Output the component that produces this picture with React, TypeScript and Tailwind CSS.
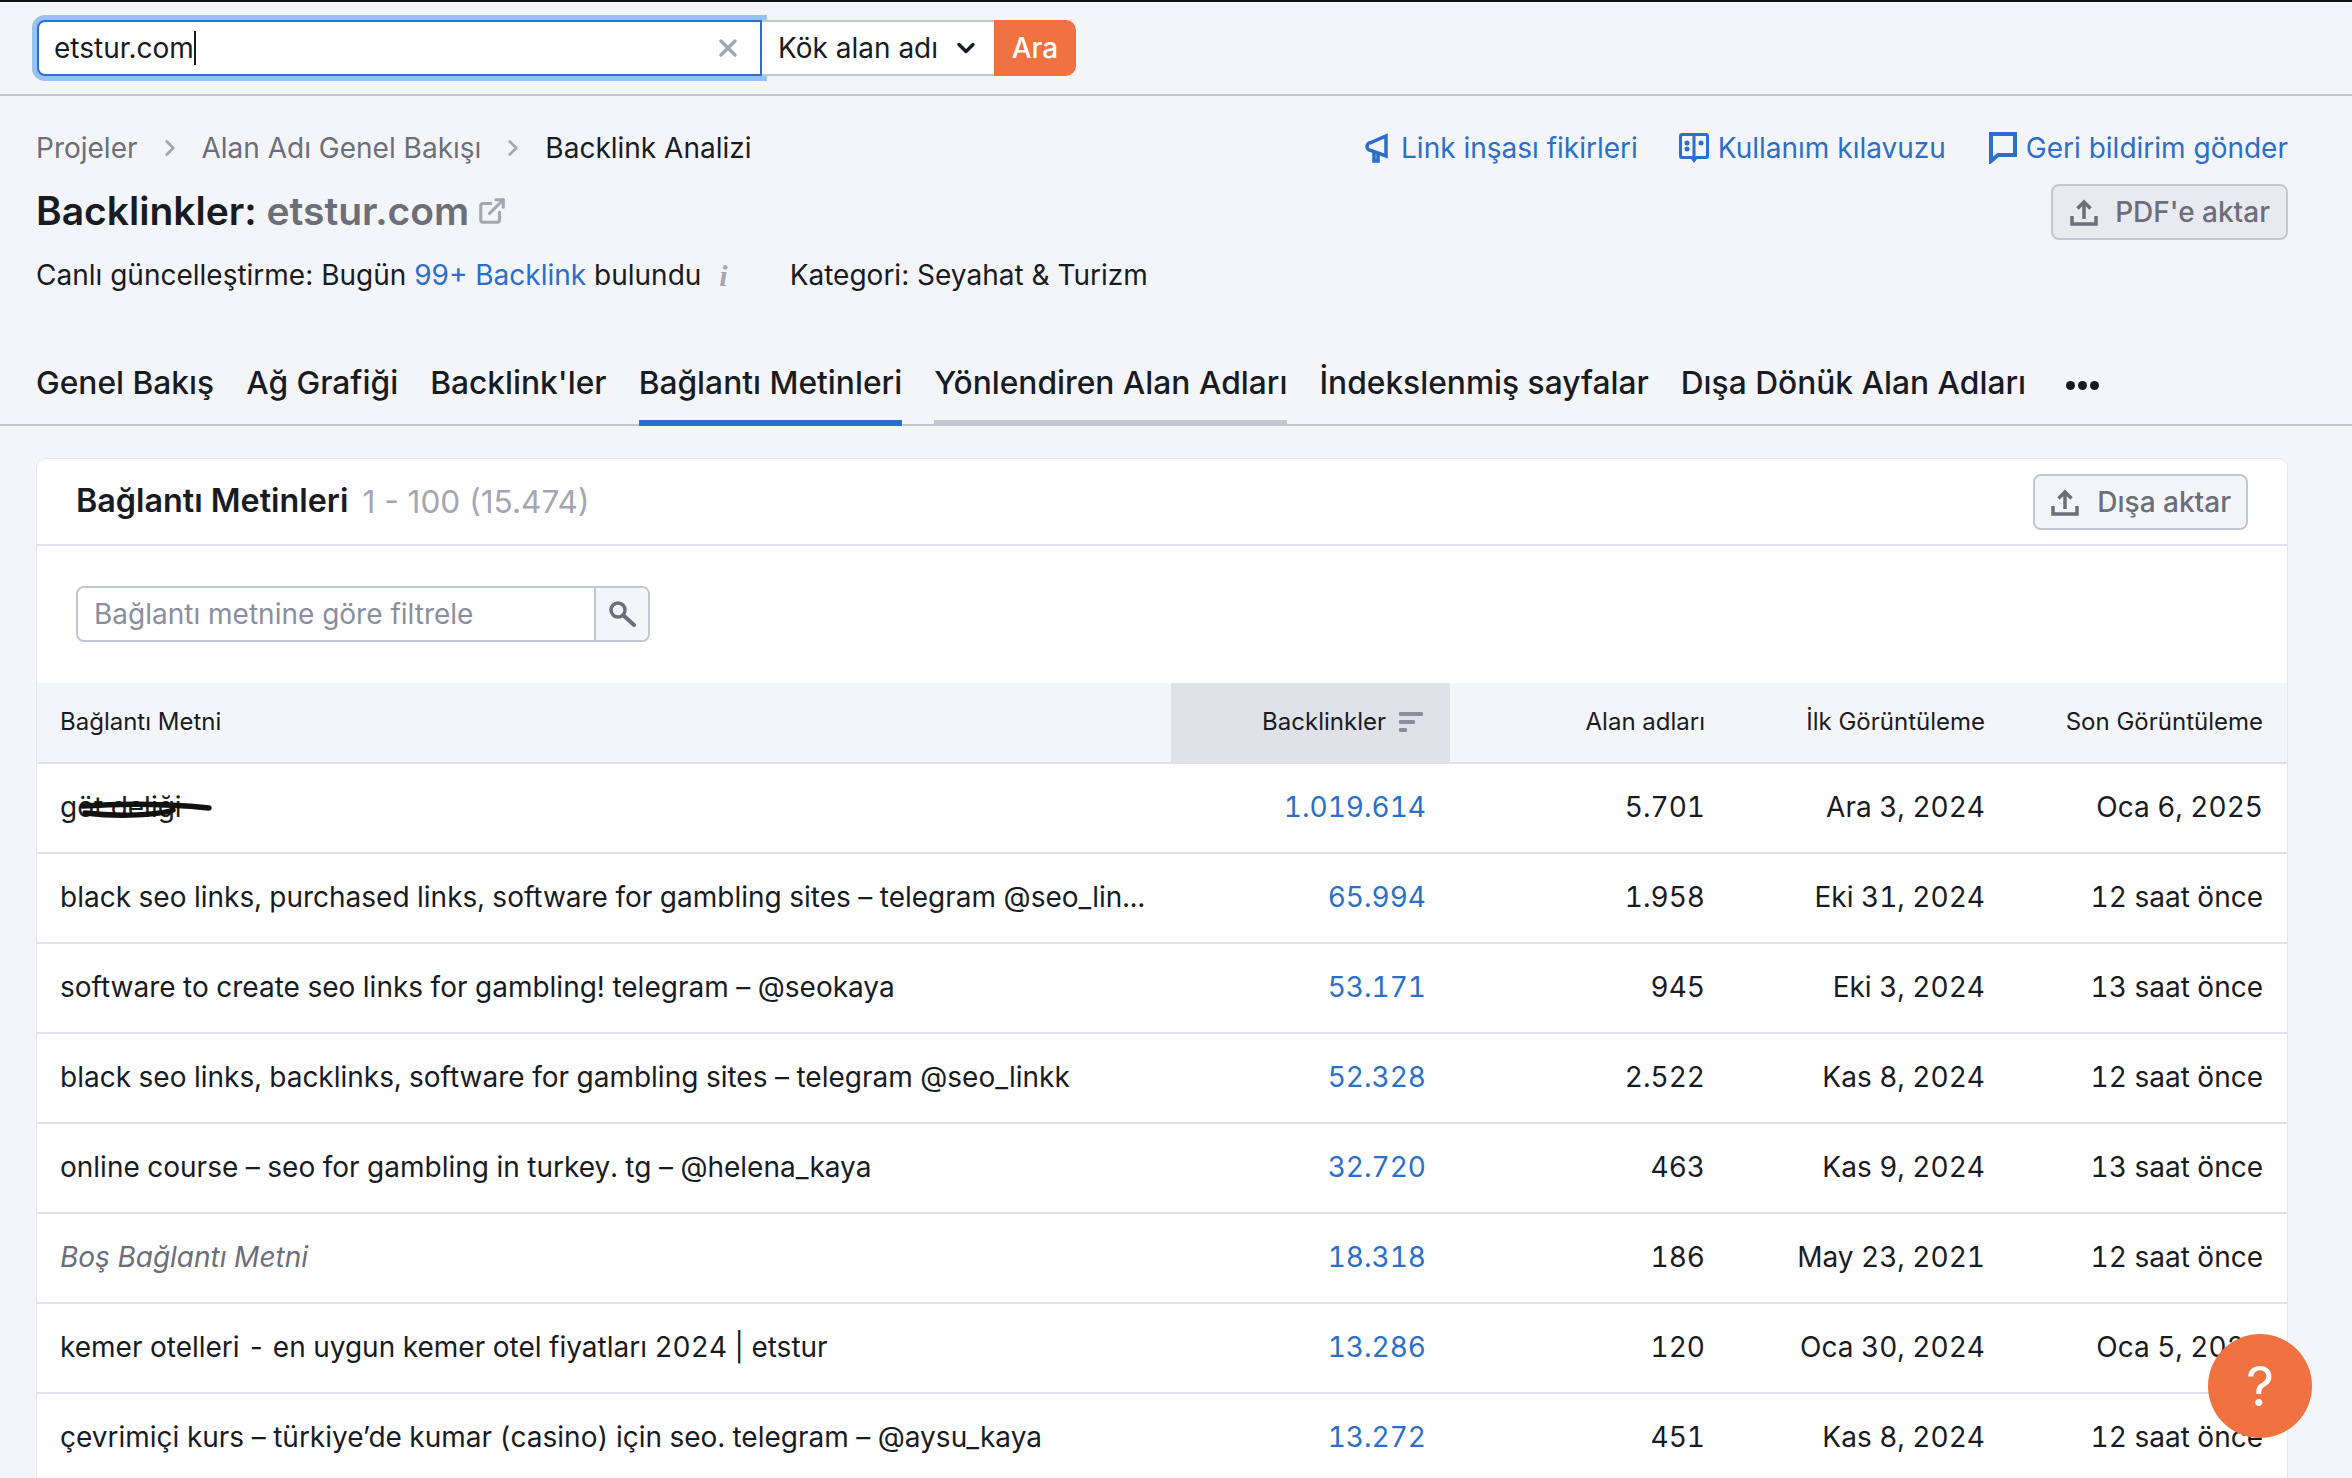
import { X, ChevronDown, ChevronRight, ExternalLink } from 'lucide-react'

const rows = [
  { text: 'göt deliği', backlinks: '1.019.614', domains: '5.701', first: 'Ara 3, 2024', last: 'Oca 6, 2025' },
  { text: 'black seo links, purchased links, software for gambling sites – telegram @seo_lin...', backlinks: '65.994', domains: '1.958', first: 'Eki 31, 2024', last: '12 saat önce' },
  { text: 'software to create seo links for gambling! telegram – @seokaya', backlinks: '53.171', domains: '945', first: 'Eki 3, 2024', last: '13 saat önce' },
  { text: 'black seo links, backlinks, software for gambling sites – telegram @seo_linkk', backlinks: '52.328', domains: '2.522', first: 'Kas 8, 2024', last: '12 saat önce' },
  { text: 'online course – seo for gambling in turkey. tg – @helena_kaya', backlinks: '32.720', domains: '463', first: 'Kas 9, 2024', last: '13 saat önce' },
  { text: 'Boş Bağlantı Metni', backlinks: '18.318', domains: '186', first: 'May 23, 2021', last: '12 saat önce', empty: true },
  { text: 'kemer otelleri - en uygun kemer otel fiyatları 2024 | etstur', backlinks: '13.286', domains: '120', first: 'Oca 30, 2024', last: 'Oca 5, 2025' },
  { text: 'çevrimiçi kurs – türkiye’de kumar (casino) için seo. telegram – @aysu_kaya', backlinks: '13.272', domains: '451', first: 'Kas 8, 2024', last: '12 saat önce' },
]

const tabs = ['Genel Bakış', 'Ağ Grafiği', "Backlink'ler", 'Bağlantı Metinleri', 'Yönlendiren Alan Adları', 'İndekslenmiş sayfalar', 'Dışa Dönük Alan Adları']

function UploadIcon() {
  return (
    <svg width="30" height="30" viewBox="0 0 30 30" fill="none" stroke="#6c6e79" strokeWidth="3.5">
      <path d="M15 22V5M8.500 11.500 15 5l6.500 6.500" />
      <path d="M3 19v8h24v-8" />
    </svg>
  )
}

export default function App() {
  return (
    <div className="h-[1478px] overflow-hidden bg-[#f4f5f9] font-['Inter',sans-serif] text-[#191b23]">
      {/* search bar */}
      <div className="flex h-[96px] items-center border-t-2 border-b-2 border-t-[#111] border-b-[#c4c7cf] pl-[37px]">
        <div className="flex h-[56px] w-[725px] items-center rounded-l-[8px] border-2 border-[#2a6fc9] bg-white pr-[18px] pl-[15px] shadow-[0_0_0_5px_#96c1f5]">
          <span className="text-[28px] text-[#191b23]">etstur.com</span>
          <span className="h-[34px] w-[2px] bg-[#191b23]" />
          <X className="ml-auto text-[#a4a6b3]" size={28} strokeWidth={3} />
        </div>
        <div className="flex h-[56px] w-[232px] items-center border-y-2 border-[#c4c7cf] bg-white pl-[16px]">
          <span className="text-[28px] text-[#191b23]">Kök alan adı</span>
          <ChevronDown className="ml-[14px]" size={28} strokeWidth={3} />
        </div>
        <div className="flex h-[56px] w-[82px] items-center justify-center rounded-r-[10px] bg-[#f07241] text-[28px] font-medium text-white">Ara</div>
      </div>

      {/* page heading */}
      <div className="flex justify-between pt-[32px] pr-[64px] pl-[36px]">
        <div>
          <div className="flex h-[40px] items-center text-[28px]">
            <span className="text-[#6c6e79]">Projeler</span>
            <ChevronRight className="mx-[19px] text-[#a4a6b3]" size={26} strokeWidth={2.5} />
            <span className="text-[#6c6e79]">Alan Adı Genel Bakışı</span>
            <ChevronRight className="mx-[19px] text-[#a4a6b3]" size={26} strokeWidth={2.5} />
            <span>Backlink Analizi</span>
          </div>
          <div className="mt-[17px] flex h-[52px] items-center text-[39px] font-semibold">
            <span>Backlinkler:&nbsp;</span>
            <span className="text-[#6c6e79]">etstur.com</span>
            <ExternalLink className="ml-[8px] text-[#a4a6b3]" size={30} strokeWidth={2.5} />
          </div>
          <div className="mt-[18px] flex h-[40px] items-center text-[28px]">
            <span>Canlı güncelleştirme: Bugün&nbsp;</span>
            <span className="text-[#2a6fc9]">99+ Backlink</span>
            <span>&nbsp;bulundu</span>
            <span className="ml-[18px] font-['Liberation_Serif',serif] text-[30px] font-bold italic text-[#a4a6b3]">i</span>
            <span className="ml-[62px]">Kategori: Seyahat &amp; Turizm</span>
          </div>
        </div>
        <div className="flex flex-col items-end">
          <div className="flex h-[40px] items-center text-[28px] text-[#2a6fc9]">
            <svg width="24" height="30" viewBox="0 0 24 30" fill="none" stroke="#2a6fc9" strokeWidth="3.5">
              <path d="M21 3v20L6 17.500a3.500 3.500 0 0 1 0-8L21 3z" />
              <path d="M9 18v10h4v-8" />
            </svg>
            <span className="ml-[12px]">Link inşası fikirleri</span>
            <svg className="ml-[40px]" width="32" height="32" viewBox="0 0 32 32" fill="#2a6fc9">
              <path fillRule="evenodd" d="M4 1h24a3 3 0 0 1 3 3v20a3 3 0 0 1-3 3h-9l-3 4-3-4H4a3 3 0 0 1-3-3V4a3 3 0 0 1 3-3zm0 3v20h10.500V4H4zm13.500 0v20H28V4H17.500z" />
              <circle cx="9" cy="11" r="2.500" />
              <circle cx="9" cy="17" r="2.500" />
              <circle cx="23" cy="11" r="2.500" />
            </svg>
            <span className="ml-[8px]">Kullanım kılavuzu</span>
            <svg className="ml-[42px]" width="30" height="32" viewBox="0 0 30 32" fill="none" stroke="#2a6fc9" strokeWidth="4">
              <path d="M3 2h24v21H10l-7 6V2z" />
            </svg>
            <span className="ml-[8px]">Geri bildirim gönder</span>
          </div>
          <button className="mt-[16px] flex h-[56px] items-center gap-[16px] rounded-[8px] border-2 border-[#c4c7cf] bg-[#e9eaf0] px-[16px] text-[28px] font-medium text-[#6c6e79]">
            <UploadIcon />
            PDF'e aktar
          </button>
        </div>
      </div>

      {/* tabs */}
      <div className="mt-[58px] flex h-[73px] gap-[32px] border-b-2 border-[#c4c7cf] px-[36px]">
        {tabs.map((tab, i) => (
          <div
            key={tab}
            className={
              i === 3
                ? 'flex h-[73px] items-start border-b-[6px] border-[#2a6fc9] pt-[6px] text-[31.72px] font-medium'
                : i === 4
                  ? 'flex h-[73px] items-start border-b-[6px] border-[#c4c7cf] pt-[6px] text-[31.72px] font-medium'
                  : 'flex h-[73px] items-start pt-[6px] text-[31.72px] font-medium'
            }
          >
            {tab}
          </div>
        ))}
        <div className="ml-[8px] flex h-[64px] items-center gap-[3px]">
          <span className="h-[9px] w-[9px] rounded-full bg-[#191b23]" />
          <span className="h-[9px] w-[9px] rounded-full bg-[#191b23]" />
          <span className="h-[9px] w-[9px] rounded-full bg-[#191b23]" />
        </div>
      </div>

      {/* card */}
      <div className="mt-[32px] mr-[64px] ml-[36px] rounded-t-[10px] border border-[#e6e7ee] bg-white">
        <div className="flex h-[87px] items-center justify-between border-b-2 border-[#e0e1e9] pr-[39px] pl-[39px]">
          <div className="flex items-center gap-[14px]">
            <span className="text-[32.3px] font-semibold">Bağlantı Metinleri</span>
            <span className="text-[31.6px] text-[#a4a6b3]">1 - 100 (15.474)</span>
          </div>
          <button className="flex h-[56px] items-center gap-[17px] rounded-[8px] border-2 border-[#c4c7cf] bg-[#f4f5f9] px-[15px] text-[28px] font-medium text-[#6c6e79]">
            <UploadIcon />
            Dışa aktar
          </button>
        </div>

        <div className="flex h-[137px] items-start px-[39px] pt-[40px]">
          <div className="flex h-[56px] w-[574px] rounded-[8px] border-2 border-[#c4c7cf]">
            <div className="flex flex-1 items-center pl-[16px] text-[28px] text-[#8b8e9c]">Bağlantı metnine göre filtrele</div>
            <div className="flex w-[54px] items-center justify-center rounded-r-[6px] border-l-2 border-[#c4c7cf] bg-[#f4f5f9]">
              <svg width="28" height="28" viewBox="0 0 28 28" fill="none" stroke="#6c6e79" strokeLinecap="round">
                <circle cx="10" cy="10" r="7" strokeWidth="3.5" />
                <path d="M15.500 15.500 26 25" strokeWidth="4" />
              </svg>
            </div>
          </div>
        </div>

        <div className="grid h-[81px] grid-cols-[1134px_279px_279px_280px_278px] border-b-2 border-[#e0e1e9] bg-[#f4f5f9] text-[24px]">
          <div className="flex items-center pb-[2px] pl-[23px]">Bağlantı Metni</div>
          <div className="flex items-center justify-end gap-[13px] bg-[#e0e1e9] pr-[27px] pb-[2px]">
            Backlinkler
            <svg width="24" height="22" viewBox="0 0 24 22" fill="#8b8e9c">
              <rect x="0" y="1" width="24" height="4" rx="1" />
              <rect x="0" y="9" width="16" height="4" rx="1" />
              <rect x="0" y="17" width="8" height="4" rx="1" />
            </svg>
          </div>
          <div className="flex items-center justify-end pr-[24px] pb-[2px]">Alan adları</div>
          <div className="flex items-center justify-end pr-[24px] pb-[2px]">İlk Görüntüleme</div>
          <div className="flex items-center justify-end pr-[24px] pb-[2px]">Son Görüntüleme</div>
        </div>

        {rows.map((row, i) => (
          <div key={row.text} className="grid h-[90px] grid-cols-[1134px_279px_279px_280px_278px] items-center border-b-2 border-[#e0e1e9] pb-[2px] text-[28px] tabular-nums">
            <div className={row.empty ? 'relative pl-[23px] whitespace-pre text-[#6c6e79] italic' : 'relative pl-[23px] whitespace-pre'}>
              {row.text}
              {i === 0 && (
                <svg className="absolute top-[14px] left-[42px]" width="140" height="24" viewBox="0 0 140 24" fill="none" stroke="#111" strokeWidth="5.5" strokeLinecap="round">
                  <path d="M4 6C50 3 90 4 130 8" />
                  <path d="M6 13C40 17 80 15 94 10" />
                </svg>
              )}
            </div>
            <div className="pr-[24px] text-right text-[#2a6fc9]">{row.backlinks}</div>
            <div className="pr-[24px] text-right">{row.domains}</div>
            <div className="pr-[24px] text-right">{row.first}</div>
            <div className="pr-[24px] text-right">{row.last}</div>
          </div>
        ))}
      </div>

      {/* help button */}
      <div className="fixed top-[1334px] left-[2208px] flex h-[104px] w-[104px] items-center justify-center rounded-full bg-[#f07241] text-[55px] text-white">?</div>
    </div>
  )
}
